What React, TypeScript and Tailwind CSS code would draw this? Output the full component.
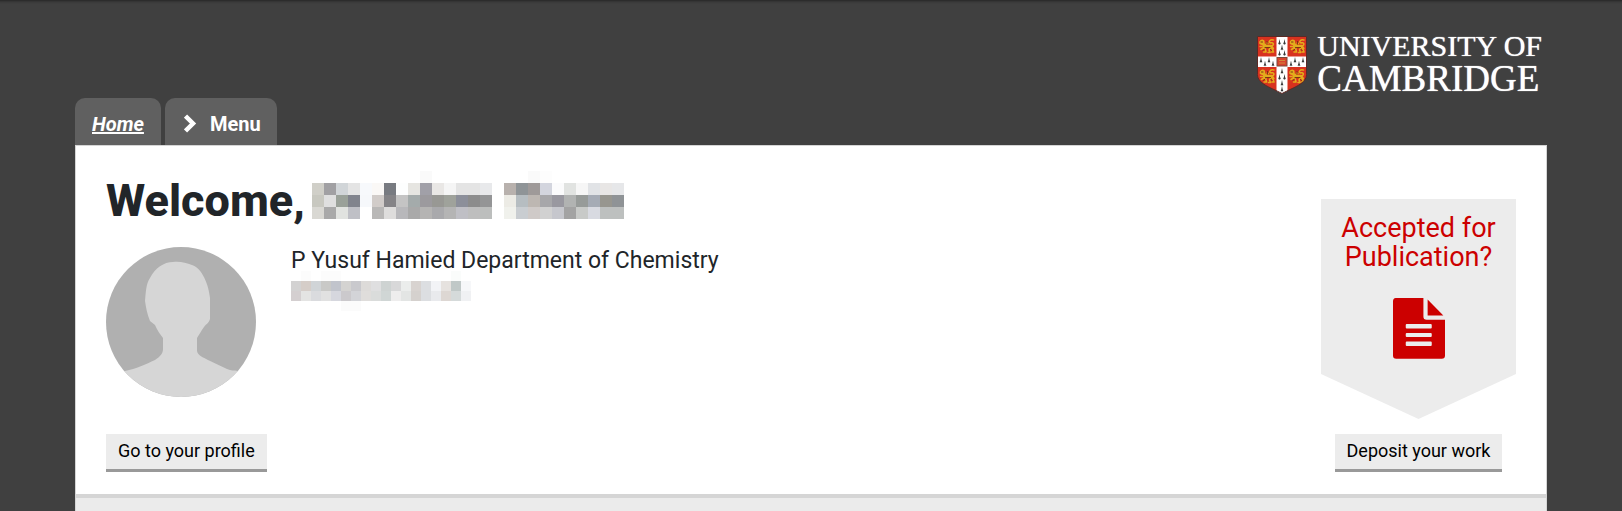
import React from 'react';

interface MosaicProps {
  rows: string[];
  cell: number;
  className?: string;
}

// Each row is a space separated list of hex colours, "-" leaves the cell empty
const NAME_ROWS = [
  '- - - - - - - - - fafafa - - - - - - - - fafafa fdfdfd - - - - - -',
  'd0cfc8 a1a0a3 d1d5d8 e4e4e4 f7f9fc faf8f6 787b81 fdfefe e6e5e1 a1a0a8 e9e7e5 f5f5f5 e4e4e4 e4e4e4 e8e9eb - b8b1ad 8f9497 9f9a99 d3d5de fbfbfc e1e3e1 f6f6f6 e1e3e6 e8e6e5 e6e7e9',
  'c8c8c0 dfdfdf 9aa199 81848d f6f8fb d1ccc9 858487 c4c4c4 a4abab 9c9a9e 989894 9fa29b 8c8f9a 8c8c8c 949596 - ecebe5 b6bdc1 bdb7b2 a7a7aa 9998a0 b1b3b2 979b99 a5abb5 97968f 8f9396',
  'd9d8d3 a9a9a9 e1e3e0 bfc0c6 - b9b8b7 dedddc b8b8bb a9a9a9 b5b4b3 a9a9ac b4b4b4 bfbfc5 bebebe bcbebd - f0f1ec c9cdd1 cfcac8 d1d1d1 c6c7cd a3a3a3 c8cac8 d8dae1 bdc0bf bdc0bf',
];

const ID_ROWS = [
  '- fcfcfc - fcfcfc fcfcfc - - - - - - - - - - - fafcfb -',
  'd3d2d2 d5cdc8 d0d4d7 c9c9c7 c1c4cc d4d3d1 c9c9cd dddbd9 dfdfe0 ced3d2 d8d8d9 ebedec d8d3d0 dcdee1 f2f3f6 e6e2df c0c8c7 f6f7f9',
  'd4cfd0 e4e4e3 dadbde e1e1e1 d6d7de cbc9cc d3d4d8 dfdddb dadcdb d0d6d5 eeeded e3e5e4 d5d1ce dcdee1 e9eaed ddd7d3 d5dada f0f1f3',
  '- - - - - fbfbfb fbfbfb - - - - - - - - - - -',
];

// Pixelated block used in place of personal details
function Mosaic({ rows, cell, className }: MosaicProps) {
  const grid = rows.map((row) => row.split(' '));
  const width = grid[1].length * cell;
  const height = grid.length * cell;

  return (
    <svg
      width={width}
      height={height}
      viewBox={`0 0 ${width} ${height}`}
      shapeRendering="crispEdges"
      className={className}
      aria-hidden="true"
    >
      {grid.map((row, y) =>
        row.map((color, x) =>
          color === '-' ? null : (
            <rect key={`${x}-${y}`} x={x * cell} y={y * cell} width={cell} height={cell} fill={`#${color}`} />
          )
        )
      )}
    </svg>
  );
}

function Lion({ x, y }: { x: number; y: number }) {
  return (
    <g transform={`translate(${x} ${y})`} fill="none" stroke="#e3ac1c" strokeLinecap="round" strokeLinejoin="round">
      <path d="M2 3.500c1-2 3-1.500 3 0s-1.500 2-3 1.200M4.500 5l3 2.200 5 .3 1.800 2.500M5 5.500l.5 4" strokeWidth="2.600" />
      <path d="M5.500 9l-3 2M6.500 9l1 4.500H5M12 9l-1.500 2.500 1 2.500H9.500M13.500 9.500l1.500 4h-2" strokeWidth="1.600" />
      <path d="M13 7.500c3-1 2-3.500 0-3.200s-3-.8-1.500-2.300 3-.5 3.500-.5" strokeWidth="1.600" />
      <path d="M3.500 8H1.500M8 4.500l1.500.5" strokeWidth="1.400" />
      <path d="M2.500 3.500h1.500M6.500 9h5M8.500 3v2.500M4.500 12l1.500-1.500M13 12l-1-1" stroke="#7a3a10" strokeWidth="1" />
    </g>
  );
}

// Ermine spot
function Spot({ x, y }: { x: number; y: number }) {
  return (
    <path transform={`translate(${x} ${y})`} d="M0-3L.6 0 1.400 2.300 .5 2 0 3-.5 2-1.400 2.300-.6 0z" fill="#3a3a3a" />
  );
}

function Crest() {
  return (
    <svg width="50" height="58" viewBox="0 0 50 58" aria-hidden="true">
      <defs>
        <clipPath id="shield">
          <path d="M.5.5h49v38c0 9-12 12.500-24.500 19C12.500 51 .5 47.500.5 38.500z" />
        </clipPath>
      </defs>
      <g clipPath="url(#shield)">
        <rect width="50" height="58" fill="#d8321f" />
        <path d="M19.500 0h11v58h-11zM0 20.500h50v10.500H0z" fill="#fff" />
        <Lion x={1.5} y={2.5} />
        <Lion x={32} y={2.5} />
        <Lion x={2} y={32.5} />
        <Lion x={31.5} y={32.5} />
        <Spot x={22.5} y={6} />
        <Spot x={27.5} y={6} />
        <Spot x={25} y={11.5} />
        <Spot x={22.5} y={17} />
        <Spot x={27.5} y={17} />
        <Spot x={4} y={24} />
        <Spot x={8} y={27.5} />
        <Spot x={12} y={24} />
        <Spot x={16} y={27.5} />
        <Spot x={34} y={27.5} />
        <Spot x={38} y={24} />
        <Spot x={42} y={27.5} />
        <Spot x={46} y={24} />
        <Spot x={25} y={35} />
        <Spot x={22.5} y={41} />
        <Spot x={27.5} y={41} />
        <Spot x={25} y={47} />
        <Spot x={25} y={53} />
        <rect x="20" y="21.500" width="10" height="8.500" fill="#d8432c" stroke="#7a4a3a" strokeWidth="1" />
        <path d="M22 24.500h6M22 27h6" stroke="#d08a3a" strokeWidth="1" />
      </g>
      <path d="M.5.5h49v38c0 9-12 12.500-24.500 19C12.500 51 .5 47.500.5 38.500z" fill="none" stroke="#5a2a26" strokeWidth="1" />
    </svg>
  );
}

function UniversityLogo() {
  return (
    <a href="#" className="flex gap-[10px] text-white" aria-label="University of Cambridge">
      <Crest />
      <span className="flex flex-col -mt-[7px] font-['Liberation_Serif',serif] [text-shadow:0_0_1px_#fff]">
        <span className="text-[30px] leading-[34px]">UNIVERSITY OF</span>
        <span className="text-[37px] leading-[31px]">CAMBRIDGE</span>
      </span>
    </a>
  );
}

function Avatar() {
  return (
    <svg width="150" height="150" viewBox="0 0 150 150" className="shrink-0" role="img" aria-label="Profile photo">
      <defs>
        <clipPath id="avatar">
          <circle cx="75" cy="75" r="75" />
        </clipPath>
      </defs>
      <g clipPath="url(#avatar)">
        <rect width="150" height="150" fill="#b0b0b0" />
        <path
          d="M0 150V124H19C30 122 40 117 49 113 55 109 57 106 57 102V91C54 87 51 83 49 78L44 74C41 67 40 60 39 54C40 44 40 37 44 31C49 21 58 15 67 15C74 14 80 16 86 18C96 21 103 38 104 51V72C103 76 100 77 98 80C95 84 93 88 91 91V104C92 109 97 110 102 113L121 122C125 124 128 123 132 124H150V150z"
          fill="#d6d6d6"
        />
      </g>
    </svg>
  );
}

function DocumentIcon() {
  return (
    <svg width="52" height="61" viewBox="0 0 53 61" preserveAspectRatio="none" fill="#c00" aria-hidden="true">
      <path
        fillRule="evenodd"
        d="M3.500 0H31v18.500a3.300 3.300 0 003.300 3.300H53v35.700a3.300 3.300 0 01-3.300 3.300H3.300A3.300 3.300 0 010 57.500V3.300A3.300 3.300 0 013.500 0zM14 26a1 1 0 00-1 1v2.500a1 1 0 001 1h24.500a1 1 0 001-1V27a1 1 0 00-1-1zM14 35a1 1 0 00-1 1v2a1 1 0 001 1h24.500a1 1 0 001-1v-2a1 1 0 00-1-1zM14 43.500a1 1 0 00-1 1V47a1 1 0 001 1h24.500a1 1 0 001-1v-2.500a1 1 0 00-1-1z"
      />
      <path d="M35.300 1.500v16H51.300z" />
    </svg>
  );
}

function ActionButton({ children }: { children: React.ReactNode }) {
  return (
    <button className="px-3 pb-0.5 h-[38px] bg-[#ececec] border-b-3 border-[#999] text-black text-[18px] leading-[30px] whitespace-nowrap">
      {children}
    </button>
  );
}

export default function App() {
  return (
    <div className="min-h-screen flex flex-col px-[75px] bg-[#404040] shadow-[inset_0_4px_3px_-3px_#222] font-[Roboto,sans-serif] text-[#212529]">
      <header className="flex justify-between pt-9 pr-[5px]">
        <nav className="flex items-end gap-1 mt-[62px] text-white text-[20px] font-bold">
          <a href="#" className="h-[47px] px-[17px] rounded-t-[10px] bg-[#606060] italic underline leading-[52px]">
            Home
          </a>
          <button className="h-[47px] pt-1 pl-[19px] pr-4 rounded-t-[10px] bg-[#606060] flex items-center gap-[13px]">
            <svg width="13" height="20" viewBox="0 0 13 20" fill="none" stroke="#fff" strokeWidth="4.500" aria-hidden="true">
              <path d="M1.500 2L9 9.500 1.500 17" />
            </svg>
            Menu
          </button>
        </nav>
        <UniversityLogo />
      </header>

      <main className="grow flex flex-col bg-white border border-b-0 border-[#d5d5d5]">
        <section className="flex justify-between px-[30px] pb-[22px] border-b-4 border-[#d5d5d5]">
          {/* Profile summary */}
          <div className="flex flex-col items-start">
            <h1 className="flex items-start gap-[7px] pt-[25px] text-[45px] leading-[60px] font-extrabold">
              Welcome,
              <Mosaic rows={NAME_ROWS} cell={12} />
            </h1>
            <div className="flex gap-[35px] mt-4">
              <Avatar />
              <div className="flex flex-col">
                <p className="text-[23px] leading-[28px]">P Yusuf Hamied Department of Chemistry</p>
                <Mosaic rows={ID_ROWS} cell={10} className="-mt-1" />
              </div>
            </div>
            <div className="mt-auto">
              <ActionButton>Go to your profile</ActionButton>
            </div>
          </div>

          {/* Deposit banner */}
          <div className="flex flex-col items-center pt-[53px]">
            <div className="w-[195px] h-[220px] pt-[15px] flex flex-col items-center bg-[#ececec] text-[#c00] text-center [clip-path:polygon(0_0,100%_0,100%_175px,50%_100%,0_175px)]">
              <h2 className="px-4 mb-[26px] text-[27px] leading-[29px]">Accepted for Publication?</h2>
              <DocumentIcon />
            </div>
            <div className="mt-[15px]">
              <ActionButton>Deposit your work</ActionButton>
            </div>
          </div>
        </section>
        <div className="grow bg-[#ebebeb]" />
      </main>
    </div>
  );
}
